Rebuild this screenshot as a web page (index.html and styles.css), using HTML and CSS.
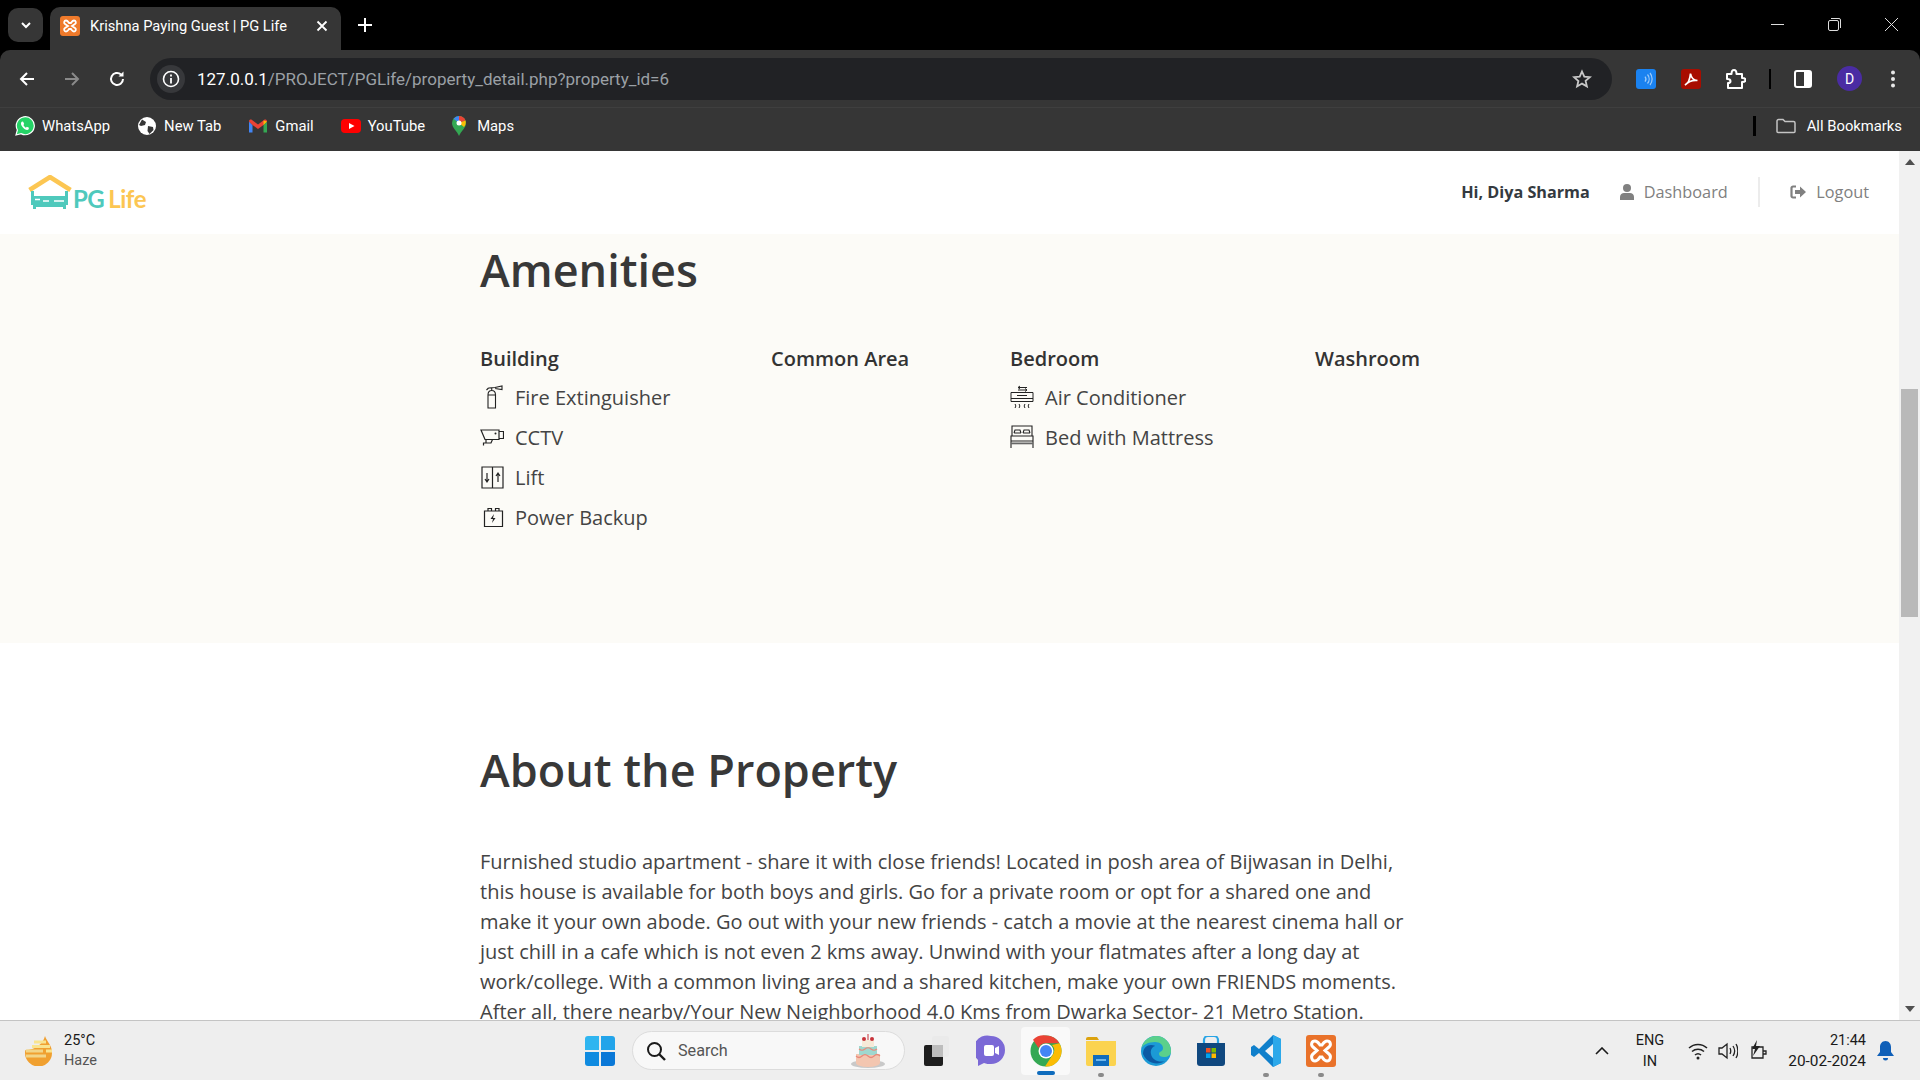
FILE: index.html
```html
<!DOCTYPE html>
<html lang="en">
<head>
    <meta charset="UTF-8">
    <meta name="viewport" content="width=device-width, initial-scale=1.0">
    <title>Krishna Paying Guest | PG Life</title>
    <link rel="stylesheet" href="styles.css">
</head>
<body>
    <!-- browser tabs -->
    <div class="tabstrip">
        <div class="tab-search">
            <svg width="14" height="14" viewBox="0 0 14 14"><path d="M3 5l4 4 4-4" fill="none" stroke="#fff" stroke-width="2"/></svg>
        </div>
        <div class="tab">
            <svg class="favicon" width="20" height="20" viewBox="0 0 20 20"><rect width="20" height="20" rx="3" fill="#ef7a2b"/><path d="M6 4.500c-2 0-2.500 2.500-1 3.500l3 2-3 2c-1.500 1-1 3.500 1 3.500 1.500 0 2-1 3-2.500h2c1 1.500 1.500 2.500 3 2.500 2 0 2.500-2.500 1-3.500l-3-2 3-2c1.500-1 1-3.500-1-3.500-1.500 0-2 1-3 2.500H9C8 5.500 7.500 4.500 6 4.500z" fill="none" stroke="#fff" stroke-width="1.800"/></svg>
            <span class="tab-title">Krishna Paying Guest | PG Life</span>
            <svg class="tab-close" width="12" height="12" viewBox="0 0 12 12"><path d="M1.500 1.500l9 9M10.500 1.500l-9 9" stroke="#fff" stroke-width="1.800"/></svg>
        </div>
        <svg class="tab-new" width="14" height="14" viewBox="0 0 14 14"><path d="M7 0v14M0 7h14" stroke="#fff" stroke-width="2"/></svg>
        <div class="window-btns">
            <svg width="13" height="13" viewBox="0 0 13 13"><path d="M0 6.500h13" stroke="#ddd" stroke-width="1"/></svg>
            <svg width="13" height="13" viewBox="0 0 13 13"><rect x=".5" y="2.500" width="10" height="10" rx="1.500" fill="none" stroke="#ddd"/><path d="M3 .5h8a1.500 1.500 0 0 1 1.500 1.500v8" fill="none" stroke="#ddd"/></svg>
            <svg width="13" height="13" viewBox="0 0 13 13"><path d="M0 0l13 13M13 0L0 13" stroke="#ddd" stroke-width="1"/></svg>
        </div>
    </div>

    <!-- address bar -->
    <div class="toolbar">
        <svg class="nav-icon" width="18" height="18" viewBox="0 0 18 18"><path d="M16 9H3M9 3L3 9l6 6" fill="none" stroke="#fff" stroke-width="2"/></svg>
        <svg class="nav-icon" width="18" height="18" viewBox="0 0 18 18"><path d="M2 9h13M9 3l6 6-6 6" fill="none" stroke="#8a8a8a" stroke-width="2"/></svg>
        <svg class="nav-icon" width="18" height="18" viewBox="0 0 18 18"><path d="M15 9a6 6 0 1 1-2-4.500" fill="none" stroke="#fff" stroke-width="2"/><path d="M15.500 1.500v5h-5z" fill="#fff"/></svg>
        <div class="omnibox">
            <div class="site-info">
                <svg width="18" height="18" viewBox="0 0 18 18"><circle cx="9" cy="9" r="7.500" fill="none" stroke="#fff" stroke-width="1.600"/><path d="M9 8v5.500M9 4.500v2" stroke="#fff" stroke-width="1.800"/></svg>
            </div>
            <span class="url"><span class="url-host">127.0.0.1</span>/PROJECT/PGLife/property_detail.php?property_id=6</span>
            <svg class="star" width="20" height="20" viewBox="0 0 20 20"><path d="M10 2.500l2.300 5.200 5.600.5-4.300 3.700 1.300 5.500L10 14.600l-4.900 2.900 1.300-5.500L2.100 8.200l5.600-.5z" fill="none" stroke="#c8c8c8" stroke-width="1.800"/></svg>
        </div>
        <div class="ext-icons">
            <svg width="20" height="20" viewBox="0 0 20 20"><rect width="20" height="20" rx="3" fill="#1a82f0"/><path d="M9 7.500a4 4 0 0 1 0 5M11.500 5.500a7 7 0 0 1 0 9M14 4a9.500 9.500 0 0 1 0 12" fill="none" stroke="#9fcbf8" stroke-width="1.200"/></svg>
            <svg width="20" height="20" viewBox="0 0 20 20"><rect width="20" height="20" rx="3" fill="#a80d00"/><path d="M4 16c3-1.500 5-6 5.500-11.500C10 8 12 11 16.500 11.500c-4-.5-9 1-12.500 4.500z" fill="none" stroke="#fff" stroke-width="1.700"/></svg>
            <svg width="20" height="20" viewBox="0 0 20 20"><path d="M1 5h4.500C5.500 2 6.500 1 8 1s2.500 1 2.500 4H16v4c2.500 0 3.500.5 3.500 2s-1 2-3.500 2v6H2v-5c1.500 0 2.500-.5 2.500-1.800S3.500 10 1 10z" fill="none" stroke="#fff" stroke-width="2" stroke-linejoin="round"/></svg>
            <span class="ext-sep"></span>
            <svg width="18" height="18" viewBox="0 0 18 18"><rect x="1" y="1" width="16" height="16" rx="2" fill="none" stroke="#fff" stroke-width="2"/><rect x="10" y="1" width="7" height="16" fill="#fff"/></svg>
            <span class="avatar">D</span>
            <svg class="menu-dots" width="6" height="18" viewBox="0 0 6 18"><circle cx="3" cy="2.500" r="2" fill="#e8e8e8"/><circle cx="3" cy="9" r="2" fill="#e8e8e8"/><circle cx="3" cy="15.500" r="2" fill="#e8e8e8"/></svg>
        </div>
    </div>

    <!-- bookmarks -->
    <div class="bookmarks">
        <a class="bookmark">
            <svg width="20" height="20" viewBox="0 0 20 20"><path d="M1 19l1.400-5A9 9 0 1 1 6 17.600z" fill="#25d366" stroke="#fff" stroke-width="1.200"/><path d="M7 5.500c-1.500 1-1.500 3 .5 5.500s4.500 3.500 6 2.500l.5-1.800-2.200-1-.9 1c-1-.4-2-1.500-2.500-2.600l.8-1-1-2.300z" fill="#fff"/></svg>
            WhatsApp
        </a>
        <a class="bookmark">
            <svg width="20" height="20" viewBox="0 0 20 20"><circle cx="10" cy="10" r="9" fill="#fff"/><path d="M5 3.500l4 2.500-1 3-4 1-2-1zM11 10l5 1 .5 3-4 4-2-3z" fill="#363636"/></svg>
            New Tab
        </a>
        <a class="bookmark">
            <svg width="20" height="20" viewBox="0 0 20 20"><path d="M1 5.500v11h3.500V9z" fill="#4285f4"/><path d="M19 5.500v11h-3.500V9z" fill="#34a853"/><path d="M1 5.500c0-2 2-2.500 3-1.500l6 4.500L16 4c1-1 3-.5 3 1.500L15.500 9 10 13 4.500 9z" fill="#ea4335"/><path d="M15.500 4.500L19 5.500 15.500 9z" fill="#fbbc04"/></svg>
            Gmail
        </a>
        <a class="bookmark">
            <svg width="20" height="20" viewBox="0 0 20 20"><rect y="3" width="20" height="14" rx="4" fill="#f00"/><path d="M8 7l5.500 3L8 13z" fill="#fff"/></svg>
            YouTube
        </a>
        <a class="bookmark bookmark-maps">
            <svg width="14" height="20" viewBox="0 0 14 20"><path d="M7 20C5 15 0 12 0 7a7 7 0 0 1 14 0c0 5-5 8-7 13z" fill="#34a853"/><path d="M1.500 2.700A7 7 0 0 1 7 0l0 7z" fill="#4285f4"/><path d="M7 0a7 7 0 0 1 6.500 4.500L7 7z" fill="#ea4335"/><path d="M13.500 4.500A7 7 0 0 1 12 11L7 7z" fill="#fbbc04"/><circle cx="7" cy="7" r="2.500" fill="#fff"/></svg>
            Maps
        </a>
        <div class="all-bookmarks">
            <span class="bm-sep"></span>
            <svg width="20" height="16" viewBox="0 0 20 16"><path d="M1 3a1.500 1.500 0 0 1 1.500-1.500H7l2 2h8.500A1.500 1.500 0 0 1 19 5v8.500a1 1 0 0 1-1 1H2a1 1 0 0 1-1-1z" fill="none" stroke="#c4c4c4" stroke-width="1.500"/></svg>
            <span>All Bookmarks</span>
        </div>
    </div>

    <div class="viewport">
        <div class="page">
            <header class="site-header">
                <a class="logo">
                    <svg width="44" height="36" viewBox="0 0 44 36">
                        <path d="M1.500 15L22 2l20.500 13" fill="none" stroke="#fcc652" stroke-width="4.500"/>
                        <path d="M3 16h3v5h31v-5h3v14h-2v4h-3v-2H8v2H5v-4H3z" fill="#4fc9bc"/>
                        <path d="M7 24.500h5M15 26h6M26 26h10" stroke="#fff" stroke-width="1.300"/>
                    </svg>
                    <span class="logo-pg">PG</span><span class="logo-life">Life</span>
                </a>
                <nav class="site-nav">
                    <span class="greeting">Hi, Diya Sharma</span>
                    <a class="nav-link">
                        <svg width="14" height="16" viewBox="0 0 14 16"><circle cx="7" cy="4" r="4" fill="#808080"/><path d="M0 16v-3c0-2.500 2-4 4-4h6c2 0 4 1.500 4 4v3z" fill="#808080"/></svg>
                        Dashboard
                    </a>
                    <span class="nav-sep"></span>
                    <a class="nav-link">
                        <svg width="16" height="14" viewBox="0 0 16 14"><path d="M6 1.500H3A1.500 1.500 0 0 0 1.500 3v8A1.500 1.500 0 0 0 3 12.500h3" fill="none" stroke="#808080" stroke-width="2.200"/><path d="M5 5h5V1.500L16 7l-6 5.500V9H5z" fill="#808080"/></svg>
                        Logout
                    </a>
                </nav>
            </header>

            <section class="amenities">
                <h1 class="section-title">Amenities</h1>
                <div class="amenity-grid">
                    <div>
                        <h5 class="amenity-heading">Building</h5>
                        <div class="amenity">
                            <svg class="amenity-icon" viewBox="0 0 24 24"><path d="M8 10h7.500v13H8zM8 10c0-3 1.200-4.500 3.750-4.500S15.500 7 15.500 10M11.750 5.500V2.500M8.500 3l6.500-.5 7-1.500v3.500l-7-1M8.500 3L6.500 5" fill="none" stroke="#222" stroke-width="1.100"/></svg>
                            <span>Fire Extinguisher</span>
                        </div>
                        <div class="amenity">
                            <svg class="amenity-icon" viewBox="0 0 24 24"><path d="M1 5h18v9.500H5zM19 6.500h4.500v7H19M6 14.500v3.500H3.500v2.500M6 18h5l1.500-3.500" fill="none" stroke="#222" stroke-width="1.200"/><circle cx="15.500" cy="8.500" r="1" fill="#222"/></svg>
                            <span>CCTV</span>
                        </div>
                        <div class="amenity">
                            <svg class="amenity-icon" viewBox="0 0 24 24"><path d="M2 2h21v21H2zM12.500 2v21M7 8v9M5 14l2 3 2-3M18 17V8M16 11l2-3 2 3" fill="none" stroke="#222" stroke-width="1.200"/></svg>
                            <span>Lift</span>
                        </div>
                        <div class="amenity">
                            <svg class="amenity-icon" viewBox="0 0 24 24"><path d="M4.500 6h18v15.500h-18zM8 6V3.500h3.500V6M15.500 6V3.500H19V6" fill="none" stroke="#222" stroke-width="1.200"/><path d="M14 9l-3.500 5H13l-1 4 3.500-5H13z" fill="#222"/></svg>
                            <span>Power Backup</span>
                        </div>
                    </div>
                    <div>
                        <h5 class="amenity-heading">Common Area</h5>
                    </div>
                    <div>
                        <h5 class="amenity-heading">Bedroom</h5>
                        <div class="amenity">
                            <svg class="amenity-icon" viewBox="0 0 24 24"><path d="M1 7.500h22v9H1zM1 13.500h22M7 10.500h10M8 2.500h9M8 2.500l2-1.500M8 2.500L10 4M8 5h9M17 5l-2-1.500M17 5l-2 1.500M5 19c1 1.500 1 2.500 0 4M9 19c1 1.500 1 2.500 0 4M15 19c-1 1.500-1 2.500 0 4M19 19c-1 1.500-1 2.500 0 4" fill="none" stroke="#222" stroke-width="1"/></svg>
                            <span>Air Conditioner</span>
                        </div>
                        <div class="amenity">
                            <svg class="amenity-icon" viewBox="0 0 24 24"><path d="M2 11V1h20v10M1 11h22v5H1zM1 16v7M23 16v7M4 8h7M13 8h7M4 8l1-3h5l1 3M13 8l1-3h5l1 3" fill="none" stroke="#222" stroke-width="1.100"/><path d="M1 17.500h22v1.800H1z" fill="#666"/></svg>
                            <span>Bed with Mattress</span>
                        </div>
                    </div>
                    <div>
                        <h5 class="amenity-heading">Washroom</h5>
                    </div>
                </div>
            </section>

            <section class="about">
                <h1 class="section-title">About the Property</h1>
                <p class="about-text">Furnished studio apartment - share it with close friends! Located in posh area of Bijwasan in Delhi, this house is available for both boys and girls. Go for a private room or opt for a shared one and make it your own abode. Go out with your new friends - catch a movie at the nearest cinema hall or just chill in a cafe which is not even 2 kms away. Unwind with your flatmates after a long day at work/college. With a common living area and a shared kitchen, make your own FRIENDS moments. After all, there nearby/Your New Neighborhood 4.0 Kms from Dwarka Sector- 21 Metro Station.</p>
            </section>
        </div>
        <div class="scrollbar">
            <svg width="10" height="6" viewBox="0 0 10 6"><path d="M5 0l5 6H0z" fill="#505050"/></svg>
            <div class="scroll-thumb"></div>
            <svg class="scroll-down" width="10" height="6" viewBox="0 0 10 6"><path d="M0 0h10L5 6z" fill="#505050"/></svg>
        </div>
    </div>

    <!-- windows taskbar -->
    <footer class="taskbar">
        <div class="weather">
            <svg width="30" height="30" viewBox="0 0 30 30"><path d="M20 0c2 6 7 9 7 17a13 13 0 0 1-27 0c0-1 0-2 .5-3C10 14 18 8 20 0z" fill="#f0a030"/><path d="M1 15h17M1 20h20" stroke="#f2d588" stroke-width="3"/><path d="M9 6h12M7 10.500h18M21 15h6" stroke="#f9e48f" stroke-width="3"/></svg>
            <div class="weather-text"><span>25°C</span><span class="weather-sub">Haze</span></div>
        </div>
        <div class="task-slot task-start">
            <svg width="30" height="30" viewBox="0 0 30 30"><path d="M0 3a3 3 0 0 1 3-3h11v14H0z" fill="#2fb5f0"/><path d="M16 0h11a3 3 0 0 1 3 3v11H16z" fill="#22a4ea"/><path d="M0 16h14v14H3a3 3 0 0 1-3-3z" fill="#0f8be0"/><path d="M16 16h14v11a3 3 0 0 1-3 3H16z" fill="#0a78d7"/></svg>
        </div>
        <div class="task-search">
            <svg width="20" height="20" viewBox="0 0 20 20"><circle cx="8.500" cy="8.500" r="6.500" fill="none" stroke="#1a1a1a" stroke-width="2"/><path d="M13 13l6 6" stroke="#1a1a1a" stroke-width="2.400"/></svg>
            <span class="task-search-label">Search</span>
            <svg class="cake" width="36" height="34" viewBox="0 0 36 34"><ellipse cx="18" cy="30" rx="17" ry="4" fill="#c9c9c9"/><path d="M6 20h24v9a12 4 0 0 1-24 0z" fill="#f3c6b0"/><path d="M9 12h18v9H9z" fill="#9fd8cf"/><path d="M12 6h12v7H12z" fill="#f6ead8"/><path d="M6 22q3 3 6 0t6 0 6 0 6 0M9 15q3 2.500 6 0t6 0 6 0" fill="none" stroke="#e88a7a" stroke-width="1.200"/><circle cx="14" cy="5" r="2" fill="#c8333a"/><circle cx="22" cy="5" r="2" fill="#c8333a"/><path d="M18 0v6" stroke="#c8333a"/></svg>
        </div>
        <div class="task-slot task-view">
            <svg width="26" height="30" viewBox="0 0 26 30"><rect x="8" y="0" width="17" height="21" rx="2" fill="#eaeaea"/><rect x="0" y="9" width="19" height="21" rx="2" fill="#1e1e1e"/><rect x="8" y="9" width="11" height="12" fill="#bdbdbd"/></svg>
        </div>
        <div class="task-slot">
            <svg width="30" height="32" viewBox="0 0 30 32"><path d="M15 1a14 14 0 0 1 0 28c-2 0-5 0-7-1l-6 3v-6A14 14 0 0 1 15 1z" fill="#7b69d6"/><rect x="8" y="10" width="10" height="11" rx="2" fill="#fff"/><path d="M19 13l4-2v9l-4-2z" fill="#fff"/></svg>
        </div>
        <div class="task-slot task-active">
            <svg width="32" height="32" viewBox="0 0 32 32"><circle cx="16" cy="16" r="15.500" fill="#34a853"/><path d="M16 .5A15.500 15.500 0 0 1 29.400 8.200H16A8 8 0 0 0 8.500 13L3 4.800A15.500 15.500 0 0 1 16 .5z" fill="#ea4335"/><path d="M29.400 8.200A15.500 15.500 0 0 1 15 31.500L22.500 20A8 8 0 0 0 22 10z" fill="#fbbc04"/><circle cx="16" cy="16" r="7.500" fill="#fff"/><circle cx="16" cy="16" r="6" fill="#4285f4"/></svg>
            <span class="task-dot task-dot-on"></span>
        </div>
        <div class="task-slot">
            <svg width="30" height="30" viewBox="0 0 30 30"><path d="M0 3a2 2 0 0 1 2-2h9l2 3h-13z" fill="#dca20e"/><path d="M0 5h30v23a2 2 0 0 1-2 2H2a2 2 0 0 1-2-2z" fill="#fbd34f"/><rect x="7" y="19" width="16" height="11" fill="#0f6cbd"/><rect x="10" y="23" width="10" height="2" fill="#6fb6ea"/></svg>
            <span class="task-dot"></span>
        </div>
        <div class="task-slot">
            <svg width="30" height="30" viewBox="0 0 30 30"><circle cx="15" cy="15" r="15" fill="#1b9ad6"/><path d="M15 0a15 15 0 0 1 15 15c0 4-3 6-7 6-3 0-5-1-5-3 0-3 4-2 4-6 0-3-3-6-8-6C7 6 2 9 .5 12A15 15 0 0 1 15 0z" fill="#5bd08b"/><path d="M2 18c0-6 4-9 8-9 3 0 4 1 4 1-3 1-5 4-4 8 1 6 8 9 14 7a15 15 0 0 1-22-7z" fill="#0c59a4"/></svg>
        </div>
        <div class="task-slot">
            <svg width="30" height="30" viewBox="0 0 30 30"><path d="M8 8V4a4 4 0 0 1 4-4h6a4 4 0 0 1 4 4v4" fill="none" stroke="#29a5e6" stroke-width="2.200"/><path d="M1 7h28v20a3 3 0 0 1-3 3H4a3 3 0 0 1-3-3z" fill="#10487f"/><rect x="10" y="12" width="4.500" height="4.500" fill="#f25022"/><rect x="15.500" y="12" width="4.500" height="4.500" fill="#7fba00"/><rect x="10" y="17.500" width="4.500" height="4.500" fill="#00a4ef"/><rect x="15.500" y="17.500" width="4.500" height="4.500" fill="#ffb900"/></svg>
        </div>
        <div class="task-slot">
            <svg width="30" height="32" viewBox="0 0 30 32"><path d="M22 0l8 4v24l-8 4L8 18l-5 4-3-2v-8l3-2 5 4z" fill="#0f7fcb"/><path d="M22 0l8 4v24l-8 4z" fill="#2ba8ea"/><path d="M22 9l-8 7 8 7z" fill="#eef3f7"/></svg>
            <span class="task-dot"></span>
        </div>
        <div class="task-slot">
            <svg width="30" height="32" viewBox="0 0 30 32"><rect width="30" height="32" rx="3" fill="#e9722a"/><path d="M9 6c-3.500 0-4.500 4-2 6l4 3.500-4 3.500c-2.500 2-1.500 7 2 7 2.500 0 3.500-2 5-4h2c1.500 2 2.500 4 5 4 3.500 0 4.500-5 2-7l-4-3.500 4-3.500c2.500-2 1.500-6-2-6-2.500 0-3.500 2-5 4h-2C12.500 8 11.500 6 9 6z" fill="none" stroke="#fff" stroke-width="3"/></svg>
            <span class="task-dot"></span>
        </div>
        <div class="tray">
            <svg class="tray-chevron" width="14" height="8" viewBox="0 0 14 8"><path d="M1 7l6-6 6 6" fill="none" stroke="#1a1a1a" stroke-width="1.600"/></svg>
            <div class="tray-lang"><span>ENG</span><span>IN</span></div>
            <div class="tray-icons">
                <svg width="20" height="18" viewBox="0 0 20 18"><path d="M1 6a13 13 0 0 1 18 0M4 9.500a9 9 0 0 1 12 0M7 13a4.500 4.500 0 0 1 6 0" fill="none" stroke="#222" stroke-width="1.500"/><circle cx="10" cy="16" r="1.500" fill="#222"/></svg>
                <svg width="20" height="18" viewBox="0 0 20 18"><path d="M1 6h3l5-4v14l-5-4H1zM12 6c1 2 1 4 0 6M15 4c2 3 2 7 0 10M18 2c2.500 4 2.500 10 0 14" fill="none" stroke="#222" stroke-width="1.300"/></svg>
                <svg width="20" height="22" viewBox="0 0 20 22"><path d="M4 7h11v11H4zM15 11h3v3h-3" fill="none" stroke="#222" stroke-width="1.300"/><path d="M9 0L4 9h3l-2 7 7-10H8z" fill="#222"/></svg>
            </div>
            <div class="tray-clock"><span>21:44</span><span class="tray-date">20-02-2024</span></div>
            <svg class="tray-bell" width="17" height="20" viewBox="0 0 17 20"><path d="M8.500 0C5 0 3 3 3 6v5l-3 4h17l-3-4V6c0-3-2-6-5.500-6z" fill="#0f5fb8"/><path d="M6 17h5a2.500 2.500 0 0 1-5 0z" fill="#0f5fb8"/></svg>
        </div>
    </footer>
</body>
</html>
```

FILE: styles.css
```css
* {
    box-sizing: border-box;
}

html, body {
    height: 100%;
}

body {
    margin: 0;
    height: 1080px;
    overflow: hidden;
    display: flex;
    flex-direction: column;
    font-family: "Open Sans", sans-serif;
    background-color: #000;
}

svg {
    display: block;
    flex-shrink: 0;
}

/* browser chrome */
.tabstrip {
    height: 50px;
    background-color: #000;
    display: flex;
    align-items: flex-end;
    padding-left: 8px;
}

.tab-search {
    width: 35px;
    height: 34px;
    margin-bottom: 8px;
    border-radius: 10px;
    background-color: #363636;
    display: flex;
    align-items: center;
    justify-content: center;
}

.tab {
    width: 291px;
    height: 43px;
    margin-left: 7px;
    padding: 0 13px 5px 10px;
    background-color: #363636;
    border-radius: 10px 10px 0 0;
    display: flex;
    align-items: center;
    color: #fff;
}

.tab-title {
    margin-left: 10px;
    font-family: Roboto, sans-serif;
    font-size: 14.700px;
    white-space: nowrap;
}

.tab-close {
    margin-left: auto;
}

.tab-new {
    margin: 0 0 18px 17px;
}

.window-btns {
    margin: 0 22px 19px auto;
    display: flex;
    gap: 44px;
}

.toolbar {
    height: 58px;
    background-color: #363636;
    border-radius: 10px 10px 0 0;
    display: flex;
    align-items: center;
    padding-left: 18px;
    gap: 27px;
    border-bottom: 1px solid #3f3f3f;
}

.omnibox {
    width: 1462px;
    height: 42px;
    margin-left: -3px;
    border-radius: 21px;
    background-color: #212225;
    display: flex;
    align-items: center;
    padding: 0 20px 0 7px;
}

.site-info {
    width: 28px;
    height: 28px;
    border-radius: 50%;
    background-color: #37383b;
    display: flex;
    align-items: center;
    justify-content: center;
}

.url {
    margin-left: 12px;
    font-family: Roboto, sans-serif;
    font-size: 17px;
    color: #9ba0a5;
    white-space: nowrap;
}

.url-host {
    color: #fff;
}

.star {
    margin-left: auto;
}

.ext-icons {
    margin-left: -3px;
    display: flex;
    align-items: center;
    gap: 25px;
}

.ext-sep {
    width: 2px;
    height: 20px;
    margin: 0 -2px;
    background-color: #000;
}

.avatar {
    width: 25px;
    height: 25px;
    border-radius: 50%;
    background-color: #4a2ca3;
    color: #fff;
    font-family: Roboto, sans-serif;
    font-size: 14px;
    display: flex;
    align-items: center;
    justify-content: center;
}

.menu-dots {
    margin-left: 3px;
}

.bookmarks {
    height: 43px;
    padding: 0 0 8px 15px;
    background-color: #363636;
    display: flex;
    align-items: center;
    color: #fff;
    font-family: Roboto, sans-serif;
    font-size: 14.800px;
}

.bookmark {
    display: flex;
    align-items: center;
    gap: 7px;
    margin-right: 27px;
}

.bookmark-maps {
    gap: 11px;
}

.all-bookmarks {
    margin-left: auto;
    margin-right: 18px;
    display: flex;
    align-items: center;
    gap: 11px;
}

.bm-sep {
    width: 3px;
    height: 20px;
    margin-right: 9px;
    background-color: #000;
}

/* page */
.viewport {
    flex: 1;
    min-height: 0;
    display: flex;
    background-color: #fff;
    overflow: hidden;
}

.page {
    flex: 1;
    min-width: 0;
    color: #333;
}

.site-header {
    height: 83px;
    background-color: #fff;
    display: flex;
    align-items: center;
    justify-content: space-between;
    padding: 0 30px 0 28px;
}

.logo {
    display: flex;
    align-items: flex-end;
    margin-top: 1px;
    font-family: Lato, sans-serif;
    font-weight: 700;
    font-size: 24px;
    line-height: 24px;
    letter-spacing: -0.5px;
}

.logo-pg {
    color: #4fc9bc;
    margin-left: 1px;
}

.logo-life {
    color: #fcc652;
    margin-left: 4px;
}

.site-nav {
    display: flex;
    align-items: center;
    margin-top: -1px;
}

.greeting {
    font-size: 16.200px;
    font-weight: 700;
    color: #343a40;
    margin-right: 30px;
}

.nav-link {
    display: flex;
    align-items: center;
    gap: 10px;
    font-size: 16.300px;
    color: #808080;
}

.nav-sep {
    width: 2px;
    height: 30px;
    margin: 0 30px 0 30.500px;
    background-color: #ececec;
}

.amenities {
    height: 409px;
    padding: 9px 0 0 480px;
    background-color: #fcfbf7;
}

.about {
    padding: 100px 0 0 480px;
}

.section-title {
    margin: 0 0 50px;
    font-size: 45px;
    line-height: 54px;
    font-weight: 600;
    color: #383838;
}

.amenity-grid {
    display: grid;
    grid-template-columns: 291px 239px 305px 150px;
}

.amenity-heading {
    margin: 0 0 11px;
    font-size: 20px;
    line-height: 24px;
    font-weight: 600;
}

.amenity {
    height: 30px;
    margin-bottom: 10px;
    display: flex;
    align-items: center;
    gap: 11px;
    font-size: 20px;
    color: #444;
}

.amenity-icon {
    width: 24px;
    height: 24px;
}

.about-text {
    width: 945px;
    margin: 0;
    font-size: 20px;
    line-height: 30px;
    color: #444;
}

.scrollbar {
    width: 21px;
    background-color: #f1f1f1;
    display: flex;
    flex-direction: column;
    align-items: center;
    padding-top: 8px;
}

.scroll-thumb {
    width: 17px;
    height: 228px;
    margin-top: 224px;
    background-color: #b9b9b9;
}

.scroll-down {
    margin-top: auto;
    margin-bottom: 8px;
}

/* taskbar */
.taskbar {
    height: 60px;
    background-color: #eee;
    border-top: 1px solid #c4c4c4;
    display: flex;
    align-items: center;
    font-family: Roboto, sans-serif;
    color: #1a1a1a;
}

.weather {
    width: 572px;
    padding-left: 25px;
    display: flex;
    align-items: center;
    gap: 9px;
}

.weather-text {
    display: flex;
    flex-direction: column;
    gap: 2px;
    font-size: 14.500px;
    line-height: 18px;
}

.weather-sub {
    color: #555;
}

.task-slot {
    position: relative;
    width: 55px;
    height: 48px;
    display: flex;
    align-items: center;
    justify-content: center;
}

.task-view {
    width: 52px;
    margin-left: 2px;
}

.task-active {
    background-color: #f9f9f9;
    border-radius: 4px;
    width: 49px;
    margin: 0 3px;
}

.task-dot {
    position: absolute;
    left: 50%;
    bottom: -2px;
    width: 6px;
    height: 4px;
    margin-left: -3px;
    border-radius: 2px;
    background-color: #8a8a8a;
}

.task-dot-on {
    width: 18px;
    margin-left: -9px;
    bottom: 0;
    background-color: #0f6cbd;
}

.task-search {
    width: 273px;
    height: 39px;
    margin: 0 4px 0 5px;
    padding: 0 18px 0 13px;
    border-radius: 20px;
    background-color: #f8f8f8;
    border: 1px solid #dcdcdc;
    display: flex;
    align-items: center;
    gap: 12px;
}

.task-search-label {
    font-size: 16.200px;
    color: #555;
}

.cake {
    margin-left: auto;
}

.tray {
    margin-left: auto;
    display: flex;
    align-items: center;
}

.tray-lang {
    margin-left: 23px;
    width: 36px;
    display: flex;
    flex-direction: column;
    align-items: center;
    font-size: 14.500px;
    line-height: 21px;
}

.tray-icons {
    margin-left: 20px;
    display: flex;
    align-items: center;
    gap: 10px;
}

.tray-clock {
    margin-left: 18px;
    width: 80px;
    display: flex;
    flex-direction: column;
    align-items: flex-end;
    font-size: 14.500px;
    line-height: 21px;
    white-space: nowrap;
}

.tray-date {
    font-size: 15.400px;
}

.tray-bell {
    margin: 0 26px 0 11px;
}
```
